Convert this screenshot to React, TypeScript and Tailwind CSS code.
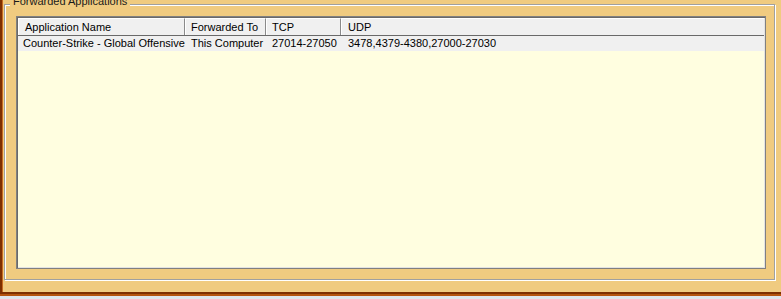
export default function App() {
  const font = { fontFamily: '"Liberation Sans", Arial, sans-serif' };
  return (
    <div
      className="flex h-[299px] w-[781px] flex-col overflow-hidden bg-[#f0cb80] text-[11px] text-black"
      style={font}
    >
      <div className="flex flex-1">
        {/* left window frame */}
        <div className="flex h-full">
          <div className="w-[2px] bg-[#7e2f00]" />
          <div className="w-[1px] bg-[#c46a22]" />
        </div>

        {/* group box */}
        <div className="ml-[1px] mt-[4px]">
          <div className="relative h-[276px] w-[771px] border border-[#a0a0a0] shadow-[1px_1px_0_#ffffff,inset_1px_1px_0_#ffffff]">
            <div className="absolute left-[5px] top-[-10px] bg-[#f0cb80] px-[3px] leading-[13px] text-[#1a1a1a]">
              Forwarded Applications
            </div>

            {/* list view */}
            <div className="ml-[11px] mt-[11px] h-[253px] w-[750px] border border-[#808080] bg-[#fffee0] p-[1px] shadow-[inset_1px_1px_0_#696969,inset_-1px_-1px_0_#e3e3e3]">
              <div className="flex h-[18px] border-b border-[#696969] bg-[#f0f0f0] leading-[16px]">
                <div className="w-[167px] border-l border-t border-r border-l-white border-t-white border-r-[#8a8a8a] pl-[6px]">
                  Application Name
                </div>
                <div className="w-[81px] border-l border-t border-r border-l-white border-t-white border-r-[#8a8a8a] pl-[5px]">
                  Forwarded To
                </div>
                <div className="w-[75px] border-l border-t border-r border-l-white border-t-white border-r-[#8a8a8a] pl-[5px]">
                  TCP
                </div>
                <div className="flex-1 border-l border-t border-l-white border-t-white pl-[6px]">
                  UDP
                </div>
              </div>
              <div className="flex h-[15px] bg-[#f0f0f0] leading-[15px]">
                <div className="w-[167px] whitespace-nowrap pl-[5px]">
                  Counter-Strike - Global Offensive
                </div>
                <div className="w-[81px] whitespace-nowrap pl-[6px]">This Computer</div>
                <div className="w-[75px] whitespace-nowrap pl-[6px]">27014-27050</div>
                <div className="flex-1 whitespace-nowrap pl-[7px]">
                  3478,4379-4380,27000-27030
                </div>
              </div>
            </div>
          </div>
        </div>
      </div>

      {/* bottom window frame */}
      <div className="h-[2px] bg-[#7e2f00]" />
      <div className="h-[2px] bg-[#b4540e]" />
      <div className="h-[3px] bg-[#dfe5ec]" />
    </div>
  );
}
